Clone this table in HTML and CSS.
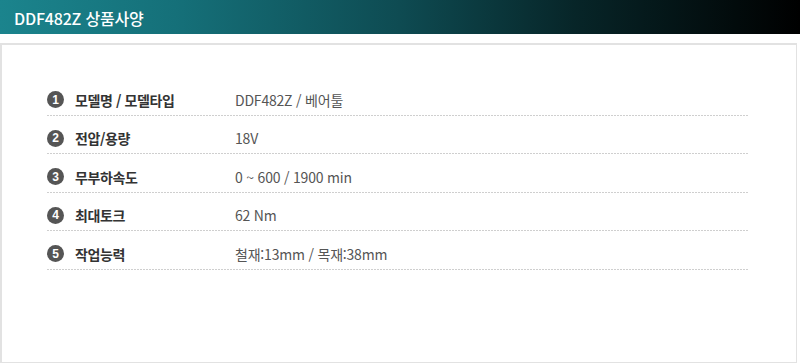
FILE: index.html
```html
<!DOCTYPE html>
<html lang="ko">
<head>
<meta charset="utf-8">
<link rel="stylesheet" href="styles.css">
</head>
<body>
<div class="header"><h1 class="title">DDF482Z 상품사양</h1></div>
<div class="box">
  <ul class="spec">
    <li class="row"><span class="badge">1</span><span class="label">모델명 / 모델타입</span><span class="value">DDF482Z / 베어툴</span></li>
    <li class="row"><span class="badge">2</span><span class="label">전압/용량</span><span class="value">18V</span></li>
    <li class="row"><span class="badge">3</span><span class="label">무부하속도</span><span class="value">0 ~ 600 / 1900 min</span></li>
    <li class="row"><span class="badge">4</span><span class="label">최대토크</span><span class="value">62 Nm</span></li>
    <li class="row"><span class="badge">5</span><span class="label">작업능력</span><span class="value">철재:13mm / 목재:38mm</span></li>
  </ul>
</div>
</body>
</html>
```
FILE: styles.css
```css
html, body {
  margin: 0;
  padding: 0;
  background: #fff;
  width: 800px;
  height: 363px;
  overflow: hidden;
  font-family: "Noto Sans CJK KR", "Noto Sans", sans-serif;
}
.header {
  height: 34px;
  background: linear-gradient(to right, #1b848d 0%, #157079 22%, #0e4b52 50%, #072528 72%, #000 100%);
  display: flex;
  align-items: center;
  padding-left: 14px;
}
.title {
  margin: 0;
  color: #fff;
  font-size: 16px;
  font-weight: 500;
  letter-spacing: -0.2px;
  line-height: 1;
  padding-top: 1px;
}
.box {
  margin-top: 9px;
  width: 797px;
  height: 320px;
  box-sizing: border-box;
  border: 2px solid #e2e2e2;
  border-right-width: 1px;
  border-bottom-width: 1px;
  padding: 32px 0 0 45px;
}
.spec {
  list-style: none;
  margin: 0;
  padding: 0;
  width: 702px;
}
.row {
  display: flex;
  align-items: center;
  box-sizing: border-box;
  height: 39px;
  padding-top: 6px;
  background-image: linear-gradient(to right, #cfcfcf 2px, transparent 2px);
  background-size: 3px 1px;
  background-repeat: repeat-x;
  background-position: left bottom;
}
.row:nth-child(even) {
  height: 38px;
}
.badge {
  display: flex;
  align-items: center;
  justify-content: center;
  width: 17px;
  height: 17px;
  border-radius: 50%;
  background: #555;
  color: #fff;
  font-family: "Liberation Sans", sans-serif;
  font-size: 12px;
  font-weight: 700;
  margin-left: 0;
  flex: none;
}
.label {
  width: 160px;
  margin-left: 11px;
  font-size: 14px;
  font-weight: 700;
  color: #333;
  letter-spacing: -0.4px;
}
.value {
  font-size: 14px;
  color: #555;
  letter-spacing: -0.2px;
}
```
